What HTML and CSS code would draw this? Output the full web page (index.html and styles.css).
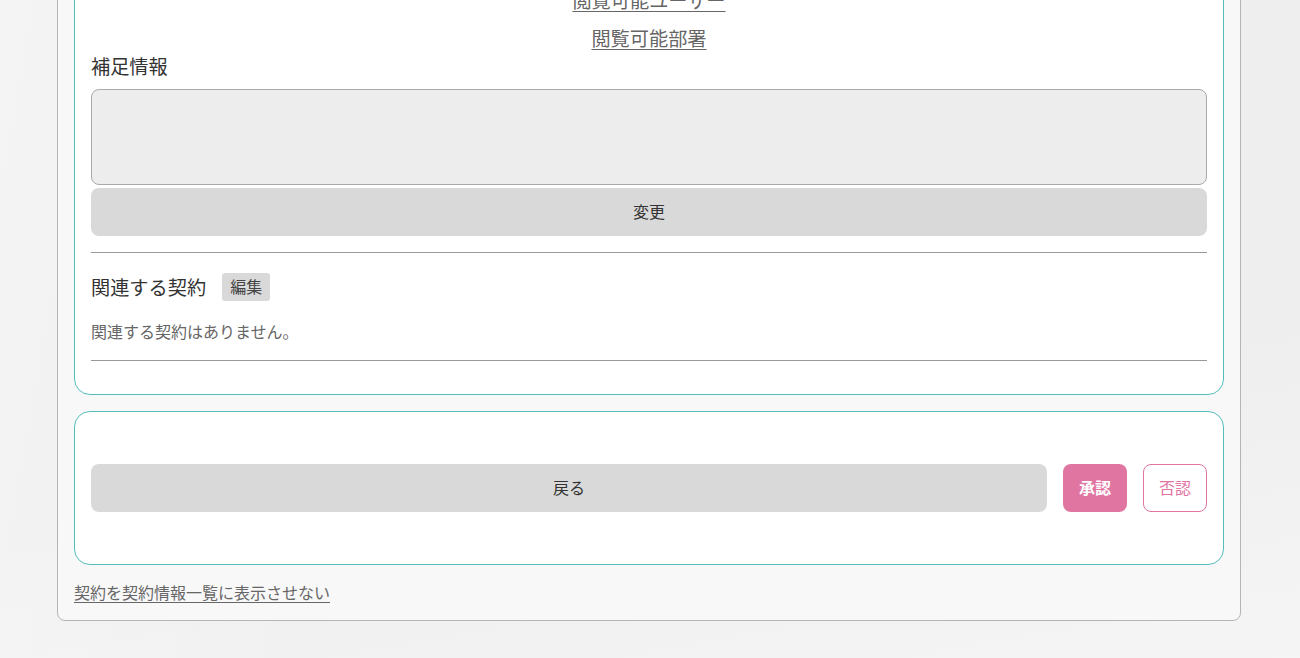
FILE: index.html
```html
<!DOCTYPE html>
<html lang="ja">
<head>
<meta charset="utf-8">
<link rel="stylesheet" href="styles.css">
</head>
<body>
<div class="bg-shape"></div>
<main class="page">
  <section class="card">
    <div class="links">
      <a class="center-link" href="#">閲覧可能ユーザー</a>
      <a class="center-link" href="#">閲覧可能部署</a>
    </div>
    <div class="label">補足情報</div>
    <textarea class="note"></textarea>
    <button class="btn btn-gray">変更</button>
    <hr class="rule">
    <div class="related-head">
      <span class="label inline">関連する契約</span>
      <button class="badge">編集</button>
    </div>
    <p class="empty">関連する契約はありません。</p>
    <hr class="rule last">
  </section>
  <section class="card actions">
    <button class="btn btn-gray grow">戻る</button>
    <button class="btn btn-approve">承認</button>
    <button class="btn btn-reject">否認</button>
  </section>
  <a class="hide-link" href="#">契約を契約情報一覧に表示させない</a>
</main>
</body>
</html>
```
FILE: styles.css
```css
html, body {
  margin: 0;
  padding: 0;
}
body {
  background: #eeeeee;
  font-family: "Noto Sans CJK JP", "Noto Sans", sans-serif;
  color: #333;
  height: 658px;
  overflow: hidden;
  position: relative;
}
.bg-shape {
  position: absolute;
  left: 0;
  top: 0;
  width: 1300px;
  height: 658px;
  background:
    linear-gradient(100deg, rgba(255,255,255,0.35) 0%, rgba(255,255,255,0) 30%),
    linear-gradient(170deg, rgba(255,255,255,0) 60%, rgba(255,255,255,0.4) 100%);
  z-index: 0;
}
.page {
  position: relative;
  z-index: 1;
  box-sizing: border-box;
  width: 1184px;
  margin: -48px 0 0 57px;
  padding: 16px;
  background: #f8f8f8;
  border: 1px solid #b5b5b5;
  border-radius: 0 0 8px 8px;
}
.card {
  background: #fff;
  border: 1px solid #55bcbc;
  border-radius: 16px;
  padding: 16px 16px 17px;
}
.links {
  display: flex;
  flex-direction: column;
  align-items: center;
  gap: 10px;
}
.center-link {
  font-size: 19.2px;
  line-height: 28px;
  color: #666;
  text-decoration: underline;
  text-underline-offset: 3px;
}
.label {
  font-size: 19.2px;
  line-height: 28px;
  color: #333;
  margin-top: 0;
  margin-bottom: 9px;
}
.label.inline {
  margin: 0;
}
.note {
  display: block;
  box-sizing: border-box;
  width: 100%;
  height: 96px;
  margin: 0;
  background: #ededed;
  border: 1px solid #aaa;
  border-radius: 8px;
  resize: none;
}
.btn {
  box-sizing: border-box;
  height: 48px;
  border: none;
  border-radius: 8px;
  font-family: "Noto Sans CJK JP", "Noto Sans", sans-serif;
  font-size: 16px;
  line-height: 22px;
  padding: 0 0 2px;
  color: #333;
  cursor: pointer;
}
.btn-gray {
  display: block;
  width: 100%;
  margin-top: 3px;
  background: #d9d9d9;
}
.rule {
  border: none;
  border-top: 1px solid #999;
  margin: 16px 0 0;
}
.rule.last {
  margin-bottom: 16px;
}
.related-head {
  display: flex;
  align-items: center;
  gap: 16px;
  margin-top: 20px;
}
.badge {
  height: 28px;
  padding: 0 8px 2px;
  border: none;
  border-radius: 3px;
  background: #d9d9d9;
  font-family: "Noto Sans CJK JP", "Noto Sans", sans-serif;
  font-size: 16px;
  color: #444;
}
.empty {
  margin: 18px 0 0;
  font-size: 16px;
  line-height: 24px;
  color: #666;
}
.empty + .rule {
  margin-top: 17px;
}
.actions {
  display: flex;
  align-items: center;
  gap: 16px;
  padding: 52px 16px;
  margin-top: 16px;
}
.actions .btn-gray {
  margin: 0;
}
.grow {
  flex: 1;
}
.btn-approve {
  width: 64px;
  background: #e175a2;
  color: #fff;
  font-weight: bold;
}
.btn-reject {
  width: 64px;
  background: #fff;
  border: 1px solid #e175a2;
  color: #e175a2;
}
.hide-link {
  display: inline-block;
  margin-top: 15px;
  font-size: 16px;
  line-height: 24px;
  color: #666;
  text-decoration: underline;
  text-underline-offset: 3px;
}
```
